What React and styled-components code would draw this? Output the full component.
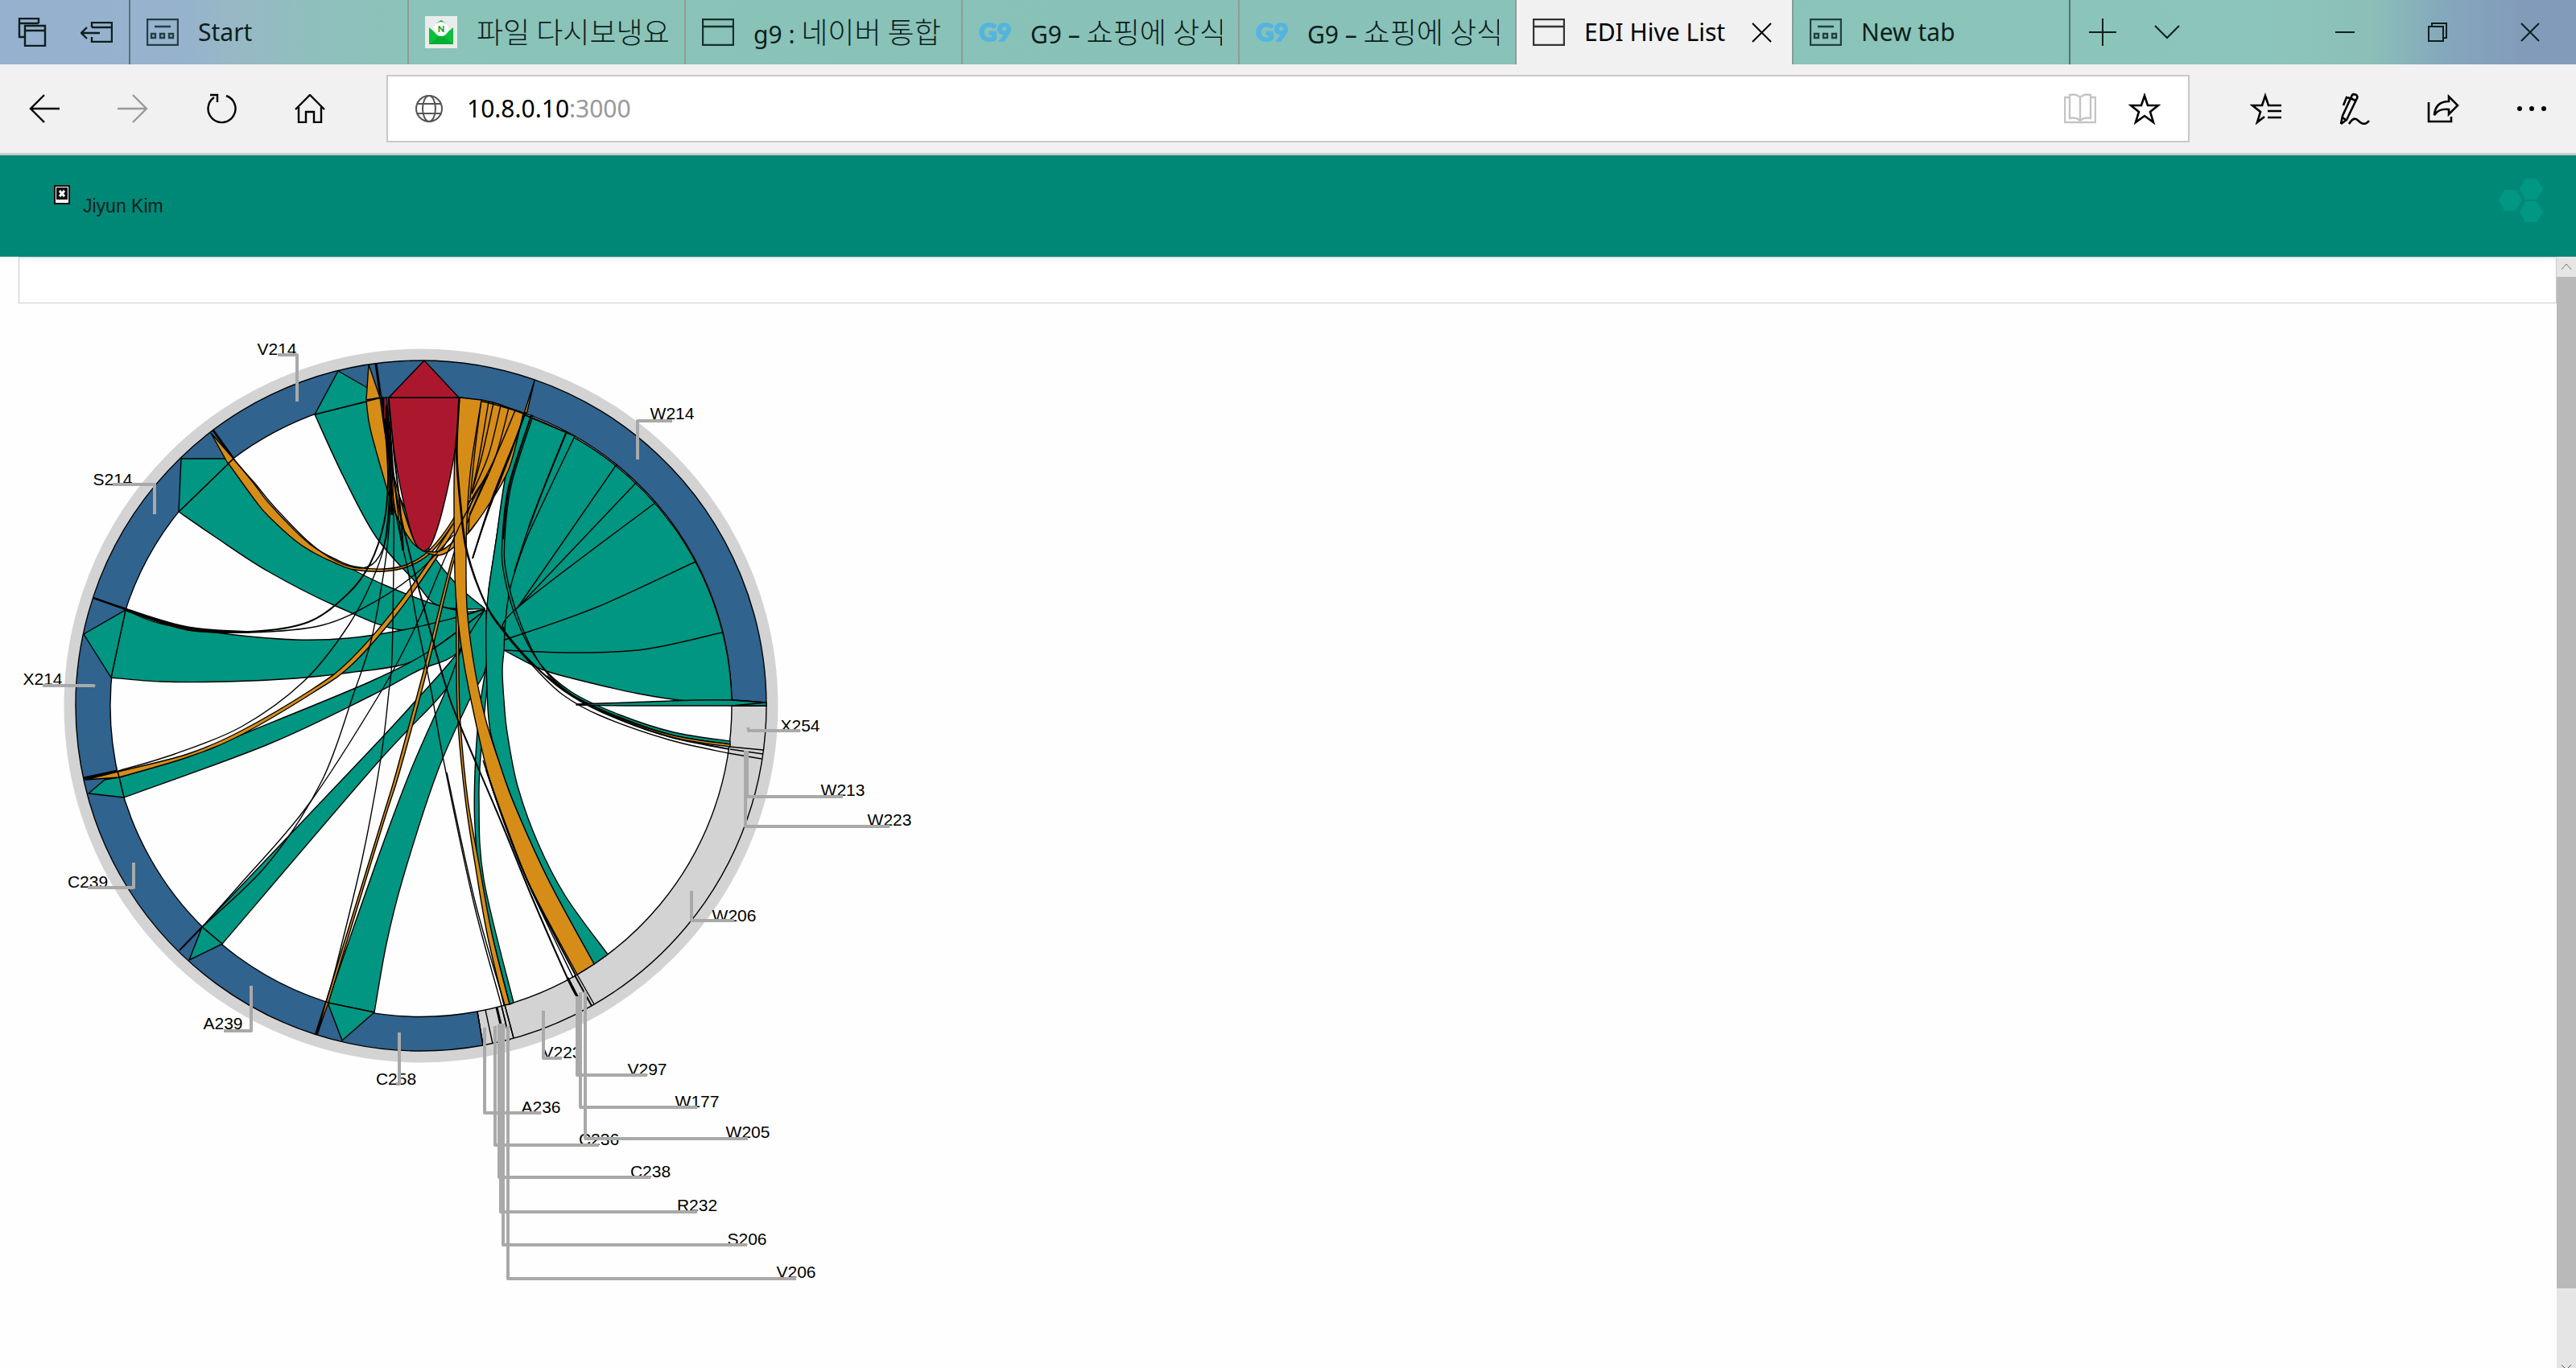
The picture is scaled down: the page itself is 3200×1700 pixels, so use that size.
import React from 'react';
import styled, { createGlobalStyle } from 'styled-components';

const GlobalStyle = createGlobalStyle`
  *, *::before, *::after { box-sizing: border-box; }
  body {
    margin: 0;
    background: #fefefe;
    font-family: "Liberation Sans", "Noto Sans CJK KR", sans-serif;
  }
  button { border: 0; padding: 0; background: none; font: inherit; color: inherit; }
`;

const uiFont = '"Noto Sans", "Noto Sans CJK KR", sans-serif';

const Window = styled.div`
  display: flex;
  flex-direction: column;
  height: 100vh;
  overflow: hidden;
`;

const TabStrip = styled.div`
  display: flex;
  flex: none;
  height: 80px;
  color: #0c1f1d;
  font-family: ${uiFont};
  background: linear-gradient(
    90deg,
    #96b1cf 0,
    #96b2cd 7%,
    #98b8c6 9%,
    #8fbfbd 12%,
    #8ac3b8 17%,
    #88c1b7 50%,
    #8cc5ba 88%,
    #8bbfb8 92%,
    #84a7bc 95%,
    #839bba 98%
  );
`;

const StripButton = styled.button`
  display: grid;
  place-items: center;
  flex: none;
  width: ${(p) => p.$width}px;
  height: 80px;
`;

const TabList = styled.div`
  display: flex;
  flex: none;
  border-left: 2px solid #56727a;
`;

const Tab = styled.div`
  display: flex;
  align-items: center;
  gap: 24px;
  width: ${(p) => (p.$wide ? 346 : 344)}px;
  height: 80px;
  padding: 0 20px;
  color: ${(p) => (p.$active ? '#000' : '#0c1f1d')};
  background: ${(p) => (p.$active ? '#f1f1f1' : 'transparent')};
  border-right: 2px solid ${(p) => (p.$active ? '#7f9f99' : p.$last ? '#4d7770' : '#8f9c96')};

  > svg { flex: none; }
`;

const TabTitle = styled.span`
  flex: 1;
  overflow: hidden;
  white-space: pre;
  font-size: 30px;
  line-height: 60px;
`;

const Hangul = styled.span`
  font-family: "Noto Sans CJK KR", sans-serif;
  font-size: 36px;
  font-weight: 300;
`;

const CloseTab = styled.button`
  display: grid;
  place-items: center;
  width: 36px;
  height: 36px;
`;

const Spacer = styled.div`
  flex: 1;
`;

const Toolbar = styled.div`
  display: flex;
  align-items: center;
  flex: none;
  height: 113px;
  background: #f1f1f1;
  border-bottom: 3px solid #c8cccb;
`;

const ToolButton = styled.button`
  display: grid;
  place-items: center;
  width: 110px;
  height: 84px;
  color: ${(p) => (p.disabled ? '#999' : '#000')};
`;

const AddressBar = styled.form`
  display: flex;
  align-items: center;
  flex: 1;
  height: 84px;
  margin: 0 40px;
  padding: 0 34px;
  background: #fff;
  border: 2px solid #c8c8c8;
  font-family: ${uiFont};
  font-size: 30px;
  line-height: 48px;
`;

const AddressInput = styled.input`
  width: 127px;
  margin-left: 30px;
  padding: 0;
  border: 0;
  outline: 0;
  background: none;
  font: inherit;
  color: #000;
`;

const Port = styled.span`
  color: #999;
`;

const BarButton = styled.button`
  display: grid;
  place-items: center;
  width: 40px;
  height: 48px;
  margin-left: 40px;
`;

const AppHeader = styled.header`
  display: flex;
  justify-content: space-between;
  flex: none;
  height: 126px;
  padding: 28px 40px 0 66px;
  background: #008876;
`;

const User = styled.div`
  display: flex;
  gap: 15px;
  padding-top: 9px;
  font-size: 23px;
  line-height: 26px;
  color: #10211e;
`;

const UserName = styled.span`
  padding-top: 13px;
`;

const Viewport = styled.div`
  display: flex;
  flex: 1;
  min-height: 0;
`;

const Content = styled.main`
  flex: 1;
  overflow: hidden;
  padding-left: 23px;
`;

const FilterInput = styled.input`
  display: block;
  width: 100%;
  height: 58px;
  padding: 0 16px;
  font-size: 22px;
  outline: 0;
  background: #fff;
  border: 1px solid #ccc;
  box-shadow: inset 0 3px 3px #eef3f3;
`;

const Chart = styled.svg`
  display: block;
  margin-left: -23px;

  text {
    font-family: "Liberation Sans", sans-serif;
    font-size: 21px;
    text-anchor: middle;
    fill: #000;
  }
`;

const Scrollbar = styled.div`
  display: flex;
  flex-direction: column;
  flex: none;
  width: 24px;
  background: #e5e5e5;
`;

const ScrollButton = styled.button`
  display: flex;
  justify-content: center;
  align-items: ${(p) => (p.$end ? 'flex-end' : 'center')};
  flex: none;
  height: ${(p) => (p.$end ? 4 : 25)}px;
  overflow: hidden;
`;

const Track = styled.div`
  flex: 1;
`;

const Thumb = styled.div`
  height: 93%;
  background: #b9b9b9;
`;

/* ---------- icons ---------- */

function Svg({ w, h, sw = 2, children, ...rest }) {
  return (
    <svg width={w} height={h} viewBox={`0 0 ${w} ${h}`} fill="none" stroke="currentColor" strokeWidth={sw} aria-hidden="true" {...rest}>
      {children}
    </svg>
  );
}

const TabsIcon = () => (
  <Svg w={36} h={36} sw={2.4}>
    <path d="M8 24H2V1H26V7M2 7H26" />
    <path d="M9 10H34V35H9ZM9 16H34" />
  </Svg>
);
const SetAsideIcon = () => (
  <Svg w={40} h={26} sw={2.4}>
    <path d="M14 7V1H39V25H14V19M14 7H39" />
    <path d="M1 14H24M8 7L1 14L8 21" />
  </Svg>
);
const StartIcon = () => (
  <Svg w={40} h={34} sw={2.4} stroke="#243f42">
    <path d="M1 1H39V33H1ZM10 10H30" />
    <path d="M6 19H11V24H6ZM17 19H22V24H17ZM28 19H33V24H28Z" />
  </Svg>
);
const PageIcon = ({ dark }) => (
  <Svg w={40} h={34} sw={2.4} stroke={dark ? '#333' : '#17302d'}>
    <path d="M1 1H39V33H1ZM1 10H39" />
  </Svg>
);
const MailIcon = () => (
  <Svg w={40} h={40} stroke="none">
    <path d="M0 0H40V40H0Z" fill="#e9ecec" />
    <path d="M20 5L26 9H14Z" fill="#0a9a3a" />
    <path d="M5 14L20 27L35 14V35H5Z" fill="#0cbf3c" />
    <path d="M5 35L20 23L35 35Z" fill="#05ad33" />
    <circle cx="20" cy="16" r="9" fill="#fff" />
    <text x="20" y="20" textAnchor="middle" fontSize="11" fontWeight="900" fontFamily="Lato" fill="#0a9a3a">N</text>
  </Svg>
);
const G9Icon = () => (
  <Svg w={40} h={34} stroke="#53b4e0" sw={1.5}>
    <text x="20" y="28" textAnchor="middle" fontSize="31" fontWeight="900" fontFamily="Lato" fill="#53b4e0">G9</text>
  </Svg>
);
const Cross = ({ size = 25 }) => (
  <Svg w={size} h={size}>
    <path d={`M1 1L${size - 1} ${size - 1}M${size - 1} 1L1 ${size - 1}`} />
  </Svg>
);
const BackIcon = () => (
  <Svg w={38} h={36} sw={2.4}>
    <path d="M38 18H2M19 1L2 18L19 35" />
  </Svg>
);
const ForwardIcon = () => (
  <Svg w={38} h={36} sw={2.4}>
    <path d="M0 18H36M19 1L36 18L19 35" />
  </Svg>
);
const RefreshIcon = () => (
  <Svg w={38} h={38} sw={2.4}>
    <path d="M25 3A17 17 0 1 1 10 5M5 2H14V11" />
  </Svg>
);
const HomeIcon = () => (
  <Svg w={38} h={36} sw={2.4}>
    <path d="M1 19L19 1L37 19M5 16V35H14V22H24V35H33V16" />
  </Svg>
);
const GlobeIcon = () => (
  <Svg w={34} h={34} stroke="#555">
    <circle cx="17" cy="17" r="16" />
    <ellipse cx="17" cy="17" rx="8" ry="16" />
    <path d="M2 11H32M2 23H32" />
  </Svg>
);
const BookIcon = () => (
  <Svg w={40} h={38} sw={2.4} stroke="#c4c4c4">
    <path d="M20 5C16 1 11 1 7 2V31C12 30 17 31 20 34C23 31 28 30 33 31V2C29 1 24 1 20 5ZM20 5V34" />
    <path d="M7 5H1V36H39V5H33" />
  </Svg>
);
const StarIcon = () => (
  <Svg w={40} h={40} sw={2.6}>
    <path d="M20 4L24 16H37L27 24L31 37L20 29L9 37L13 24L3 16H16Z" />
  </Svg>
);
const FavoritesIcon = () => (
  <Svg w={40} h={40} sw={2.6}>
    <path d="M39 16H23L19 4L15 16H3L13 24L9 37L18 30M22 23H39M22 31H39" />
  </Svg>
);
const PenIcon = () => (
  <Svg w={38} h={40} sw={2.6}>
    <path d="M2 39L4 29L16 3C18 1 24 3 22 7L9 34L2 39M4 31L8 34M14 7L20 10M13 7L9 6L5 16" />
    <path d="M12 39C19 28 22 34 26 37C30 40 34 39 37 35" />
  </Svg>
);
const ShareIcon = () => (
  <Svg w={40} h={36} sw={2.6}>
    <path d="M2 10V34H30V28" />
    <path d="M27 3L38 14L27 25V19C18 18 13 20 9 26C10 14 17 9 27 9Z" />
  </Svg>
);
const MoreIcon = () => (
  <Svg w={38} h={8} stroke="none" fill="currentColor">
    <circle cx="4" cy="4" r="3" />
    <circle cx="19" cy="4" r="3" />
    <circle cx="34" cy="4" r="3" />
  </Svg>
);
const BrokenImage = () => (
  <Svg w={22} h={24} stroke="none" role="img">
    <path d="M1 0H21V24H1Z" fill="#111" />
    <path d="M3 2H19V22H3Z" fill="#fff" />
    <path d="M4 3H18V18H4Z" fill="#111" />
    <path d="M8 7L14 14M14 7L8 14" stroke="#fff" strokeWidth="3" />
  </Svg>
);
const HiveLogo = () => (
  <Svg w={56} h={56} stroke="none" fill="#009783">
    <path d="M0 28L7 15H21L29 28L21 41H7Z" />
    <path d="M26 14L33 1H47L55 14L47 27H33Z" />
    <path d="M26 42L33 29H47L55 42L47 55H33Z" />
  </Svg>
);

/* ---------- chord chart ---------- */

const GREEN = '#009681';
const ORANGE = '#d68d17';
const RED = '#ab182d';
const BLUE = '#30638e';
const GREY = '#d3d3d3';
const HAIR = 1.4;

// Smooth cubic path through a list of [x, y] points.
function through(pts) {
  let d = '';
  for (let i = 0; i < pts.length - 1; i++) {
    const a = pts[i - 1] || pts[i];
    const b = pts[i];
    const c = pts[i + 1];
    const e = pts[i + 2] || c;
    d += `C${b[0] + (c[0] - a[0]) / 6} ${b[1] + (c[1] - a[1]) / 6} ${c[0] - (e[0] - b[0]) / 6} ${c[1] - (e[1] - b[1]) / 6} ${c[0]} ${c[1]}`;
  }
  return d;
}
const line = (pts) => `M${pts[0]}` + through(pts);
function ribbon(a, b) {
  const back = [...b].reverse();
  return `M${a[0]}${through(a)}L${back[0]}${through(back)}Z`;
}

const greenRibbons = [
  // V214
  [[[391, 515], [427, 593], [467, 667], [515, 722], [545, 753], [602, 757]], [[476, 494], [490, 600], [533, 682], [568, 727], [602, 756]]],
  // S214
  [[[222, 636], [267, 667], [333, 710], [417, 753], [500, 783], [568, 767], [602, 757]], [[290, 570], [317, 620], [367, 667], [433, 705], [480, 728], [543, 752], [580, 760], [602, 757]]],
  // X214
  [[[138, 842], [200, 847], [283, 847], [367, 843], [433, 836], [500, 826], [537, 807], [598, 762]], [[156, 758], [200, 775], [283, 788], [367, 795], [433, 793], [500, 783], [568, 767], [602, 757]]],
  // C239
  [[[154, 991], [333, 925], [460, 865], [520, 833], [567, 812], [601, 760]], [[148, 966], [233, 940], [300, 913], [460, 847], [537, 807], [598, 762]]],
  // A239
  [[[276, 1173], [467, 950], [555, 855], [573, 805], [603, 760]], [[251, 1152], [460, 932], [517, 870], [567, 813], [601, 760]]],
  // C258
  [[[465, 1258], [480, 1173], [500, 1093], [543, 960], [583, 870], [604, 827], [604, 760]], [[407, 1246], [467, 1073], [510, 958], [553, 860], [575, 803], [602, 758]]],
  // V223
  [[[633, 1248], [599, 1110], [590, 1027], [590, 960], [595, 887], [604, 828]], [[638, 1246], [601, 1093], [595, 993], [598, 927], [605, 853], [606, 830]]],
];

const fan =
  'M650 515A386 386 0 0 1 909 871' +
  through([[909, 871], [855, 871], [793, 862], [711, 843], [671, 831], [626, 808]]) +
  'L604 800L607 733L616 673L629 587Z';

const verticalRibbon = ribbon(
  [[650, 515], [629, 587], [616, 673], [607, 733], [604, 770], [604, 820], [607, 893], [616, 935], [639, 1000], [681, 1093], [738, 1198]],
  [[714, 542], [664, 647], [650, 680], [634, 730], [628, 770], [626, 808], [624, 833], [626, 870], [630, 910], [643, 977], [668, 1047], [702, 1113], [755, 1186]]
);

const fanLines = [
  [[704, 536], [676, 605], [657, 655], [639, 710]],
  [[766, 577], [643, 755]],
  [[791, 599], [643, 755]],
  [[815, 624], [643, 755], [627, 785]],
  [[864, 698], [740, 755], [627, 795]],
  [[897, 786], [800, 807], [711, 811], [626, 808]],
];

const farRibbons = [
  [GREEN, [[660, 516], [632, 603], [624, 670], [626, 713], [643, 773], [671, 825], [710, 860], [769, 888], [837, 910], [907, 921]], [[662, 517], [635, 603], [627, 670], [629, 713], [646, 773], [673, 828], [710, 863], [769, 891], [837, 914], [907, 925]]],
  [ORANGE, [[680, 840], [710, 863], [769, 892], [837, 914], [907, 925]], [[680, 841], [710, 864], [769, 894], [837, 917], [907, 928]]],
  [GREEN, [[716, 875], [780, 873], [864, 870], [909, 870], [952, 873]], [[716, 876], [780, 877], [864, 877], [909, 877], [952, 877]]],
];

const orangeRibbons = [
  // C239
  [[[598, 497], [590, 560], [575, 625], [540, 687], [487, 761], [433, 822], [387, 857], [300, 908], [233, 937], [146, 959]], [[612, 500], [600, 570], [583, 625], [545, 689], [492, 764], [437, 826], [390, 860], [300, 913], [233, 941], [148, 966]]],
  // S214
  [[[612, 500], [590, 590], [563, 645], [533, 684], [507, 701], [477, 707], [440, 704], [417, 695], [390, 680], [367, 660], [333, 624], [317, 603], [290, 570]], [[622, 503], [600, 590], [565, 648], [535, 687], [507, 704], [477, 710], [440, 708], [417, 700], [390, 687], [367, 672], [333, 641], [317, 622], [283, 575]]],
  // V214
  [[[455, 497], [460, 533], [480, 605], [490, 635], [507, 667], [523, 683], [550, 689], [582, 662], [604, 630], [627, 583], [647, 512]], [[472, 494], [482, 560], [498, 623], [515, 673], [527, 684], [548, 684], [570, 665], [590, 630], [610, 575], [632, 507]]],
  // A239
  [[[622, 503], [605, 570], [580, 640], [560, 700], [528, 827], [493, 957], [475, 1017], [431, 1160], [405, 1245]], [[632, 507], [610, 575], [584, 640], [563, 700], [532, 827], [497, 957], [478, 1017], [434, 1160], [408, 1246]]],
  // V206
  [[[571, 494], [567, 700], [567, 833], [569, 900], [578, 993], [590, 1073], [605, 1160], [626, 1249]], [[573, 494], [570, 700], [570, 833], [572, 900], [581, 993], [595, 1073], [611, 1160], [633, 1248]]],
  // W206
  [[[571, 494], [565, 563], [564, 630], [565, 713], [567, 750], [573, 803], [583, 860], [605, 957], [626, 1020], [658, 1100], [717, 1211]], [[598, 497], [585, 580], [580, 647], [579, 717], [581, 767], [590, 833], [603, 893], [620, 947], [639, 1000], [681, 1093], [738, 1198]]],
];

const orangeFan =
  'M573 494A386 386 0 0 1 650 514' +
  through([[650, 514], [632, 583], [604, 632], [582, 662]]) +
  'L583 642' +
  through([[583, 642], [595, 615], [606, 590]]) +
  through([[606, 590], [594, 607], [586, 620]]) +
  'L580 625Z';

const fanOrangeLines = [
  [[598, 497], [590, 560], [584, 620]],
  [[607, 499], [595, 570], [586, 612]],
  [[613, 501], [599, 565], [586, 612]],
  [[622, 504], [607, 565], [586, 614]],
  [[632, 507], [614, 572], [583, 640]],
];

const redBody = ribbon(
  [[483, 494], [490, 563], [502, 627], [515, 673], [526, 685]],
  [[570, 494], [565, 560], [550, 633], [536, 676], [526, 685]]
);

const thinLines = [
  [2, [[483, 494], [490, 600], [507, 680], [528, 760], [553, 850], [571, 900], [622, 1020], [660, 1113], [706, 1218], [718, 1240]]],
  [HAIR, [[480, 494], [486, 600], [498, 670], [507, 710], [518, 773], [536, 860], [550, 940], [588, 1120], [623, 1250], [633, 1293]]],
  [HAIR, [[480, 494], [486, 560], [489, 640], [489, 700], [487, 817], [483, 860], [473, 943], [450, 1067], [417, 1203], [405, 1245]]],
  [HAIR, [[478, 494], [486, 580], [482, 670], [472, 740], [460, 800], [440, 860], [400, 970], [333, 1073], [251, 1152]]],
  [HAIR, [[477, 494], [484, 580], [480, 660], [467, 710], [433, 777], [377, 847], [300, 903], [217, 937], [147, 958]]],
  [HAIR, [[640, 510], [612, 575], [575, 645], [550, 700], [517, 777], [473, 860], [383, 1000], [300, 1097], [251, 1152]]],
  [2, [[116, 743], [157, 757], [233, 780], [310, 785], [383, 773], [433, 737], [460, 700], [477, 650], [482, 600], [480, 550], [474, 494]]],
  [HAIR, [[116, 743], [157, 758], [233, 782], [310, 786], [400, 777], [467, 747], [520, 710], [563, 665]]],
  [HAIR, [[265, 535], [290, 570], [317, 601], [340, 629], [383, 673], [417, 697], [447, 706], [467, 697], [480, 667], [485, 600]]],
  [HAIR, [[482, 494], [483, 540], [490, 600], [500, 684]]],
  [2, [[485, 494], [489, 560], [496, 620], [501, 684]]],
  [3, [[476, 494], [483, 560], [487, 640]]],
  [2, [[653, 512], [640, 547], [610, 623], [587, 694]]],
  [HAIR, [[652, 513], [636, 560], [608, 632], [587, 694]]],
  [2, [[570, 494], [567, 563], [572, 630], [580, 687], [603, 750], [627, 785], [660, 823], [700, 858], [748, 885], [830, 915], [906, 931]]],
  [HAIR, [[571, 494], [568, 563], [573, 630], [581, 687], [604, 752], [627, 787], [667, 833], [700, 864], [745, 889], [830, 919], [905, 936]]],
  [2, [[660, 516], [633, 603], [625, 670]]],
  [2, [[704, 536], [676, 605], [657, 655]]],
  [HAIR, [[600, 945], [626, 1022], [658, 1102], [712, 1215]]],
  [2, [[604, 957], [627, 1022], [660, 1105], [715, 1212]]],
  [HAIR, [[555, 960], [590, 1120], [627, 1249], [638, 1290]]],
];

const separators = [
  [3, 467, 452, 473, 494], [3, 265, 535, 290, 570], [2, 116, 743, 157, 757], [3, 104, 967, 146, 958],
  [2, 223, 1181, 251, 1152], [4, 393, 1285, 406, 1245], [HAIR, 593, 1257, 600, 1299], [HAIR, 603, 1255, 612, 1297],
  [3, 617, 1252, 622, 1273], [HAIR, 623, 1250, 633, 1293], [HAIR, 627, 1249, 638, 1290], [3, 705, 1215, 718, 1240],
  [2, 714, 1212, 735, 1250], [HAIR, 717, 1211, 738, 1248], [HAIR, 907, 928, 948, 932], [HAIR, 907, 931, 948, 937],
  [HAIR, 905, 936, 946, 943], [HAIR, 909, 877, 952, 877],
];

const arrowHeads = [
  [GREEN, '391,515 420,461 474,492 474,494'],
  [ORANGE, '455,497 458,453 472,494'],
  [GREEN, '222,636 225,570 279,570 290,570'],
  [ORANGE, '283,576 262,538 290,570'],
  [GREEN, '156,758 104,788 138,842'],
  [GREEN, '148,966 130,969 110,986 154,991'],
  [ORANGE, '146,959 106,969 148,966'],
  [GREEN, '251,1152 235,1193 276,1173'],
  [GREEN, '407,1246 425,1293 465,1258'],
  [ORANGE, '405,1245 394,1285 408,1246'],
  [ORANGE, '651,514 664,473 654,515'],
];

// name, text x, text baseline, leader points
const labels = [
  ['V214', 344, 441, '369,499 369,441 345,441'],
  ['S214', 140, 603, '192,639 192,602 140,602'],
  ['X214', 53, 851, '118,853 116,852 53,852'],
  ['W214', 835, 521, '792,571 792,523 835,523'],
  ['C239', 109, 1103, '166,1072 166,1103 109,1103'],
  ['A239', 277, 1279, '312,1225 312,1281 278,1281'],
  ['C258', 492, 1348, '496,1283 496,1347 492,1347'],
  ['X254', 994, 909, '929,904 930,908 994,908'],
  ['W213', 1047, 989, '928,933 928,990 1047,990'],
  ['W223', 1105, 1026, '926,933 926,1027 1105,1027'],
  ['W206', 912, 1145, '859,1107 859,1144 912,1144'],
  ['V223', 698, 1315, '675,1256 675,1315 698,1315'],
  ['V297', 804, 1336, '717,1238 717,1336 804,1336'],
  ['W177', 866, 1376, '721,1233 721,1376 866,1376'],
  ['W205', 929, 1414, '727,1232 727,1415 929,1415'],
  ['A236', 672, 1383, '602,1277 602,1383 672,1383'],
  ['C236', 744, 1423, '615,1275 615,1423 744,1423'],
  ['C238', 808, 1463, '620,1273 620,1463 808,1463'],
  ['R232', 866, 1505, '622,1272 622,1506 866,1506'],
  ['S206', 928, 1547, '625,1272 625,1547 928,1547'],
  ['V206', 989, 1588, '631,1275 631,1589 989,1589'],
];

function ChordChart() {
  return (
    <Chart width="1200" height="1240" viewBox="0 377 1200 1240" role="img" aria-label="Hive chord chart">
      <circle cx="523" cy="877" r="436" fill="none" stroke={GREY} strokeWidth="15" />
      <g stroke="#000" strokeWidth={HAIR} strokeLinejoin="round">
        <path fill={GREY} d="M952 877A429 429 0 0 1 600 1299L593 1257A386 386 0 0 0 909 877Z" />
        <path fill={BLUE} d="M952 877A429 429 0 1 0 600 1299L593 1257A386 386 0 1 1 909 877Z" />
        {separators.map(([w, x1, y1, x2, y2], i) => (
          <line key={i} x1={x1} y1={y1} x2={x2} y2={y2} strokeWidth={w} />
        ))}
        {greenRibbons.map(([a, b], i) => <path key={i} d={ribbon(a, b)} fill={GREEN} />)}
        <path d={fan} fill={GREEN} />
        <path d={verticalRibbon} fill={GREEN} />
        {farRibbons.map(([fill, a, b], i) => <path key={i} d={ribbon(a, b)} fill={fill} />)}
        {fanLines.map((p, i) => <path key={i} d={line(p)} fill="none" />)}
        {orangeRibbons.slice(0, 5).map(([a, b], i) => <path key={i} d={ribbon(a, b)} fill={ORANGE} />)}
        <path d={orangeFan} fill={ORANGE} />
        {fanOrangeLines.map((p, i) => <path key={i} d={line(p)} fill="none" />)}
        <path d={ribbon([[157, 757], [233, 779], [310, 785]], [[157, 759], [233, 783], [310, 786]])} fill={RED} />
        {arrowHeads.map(([fill, points], i) => <polygon key={i} points={points} fill={fill} />)}
        <path d={ribbon(...orangeRibbons[5])} fill={ORANGE} />
        {thinLines.map(([w, p], i) => <path key={i} d={line(p)} fill="none" strokeWidth={w} />)}
        <path d="M909 870L952 873M909 877L952 873" fill="none" />
        <path d={redBody} fill={RED} />
        <polygon points="483,494 527,448 570,494" fill={RED} />
        <path d="M478 495V520" stroke={RED} />
      </g>
      {labels.map(([name, x, y]) => <text key={name} x={x} y={y}>{name}</text>)}
      <g fill="none" stroke="#a9a9a9" strokeWidth="4" strokeLinejoin="round">
        {labels.map(([name, , , points]) => <polyline key={name} points={points} />)}
      </g>
    </Chart>
  );
}

/* ---------- window ---------- */

const tabs = [
  { icon: <StartIcon />, latin: 'Start' },
  { icon: <MailIcon />, hangul: '파일 다시보냉요' },
  { icon: <PageIcon />, latin: 'g9 : ', hangul: '네이버 통합' },
  { icon: <G9Icon />, latin: 'G9 – ', hangul: '쇼핑에 상식' },
  { icon: <G9Icon />, latin: 'G9 – ', hangul: '쇼핑에 상식' },
  { icon: <PageIcon dark />, latin: 'EDI Hive List', active: true },
  { icon: <StartIcon />, latin: 'New tab' },
];

export default function App() {
  return (
    <Window>
      <GlobalStyle />
      <TabStrip>
        <StripButton $width={80} aria-label="Tabs set aside"><TabsIcon /></StripButton>
        <StripButton $width={80} aria-label="Set tabs aside"><SetAsideIcon /></StripButton>
        <TabList role="tablist">
          {tabs.map((tab, i) => (
            <Tab key={i} role="tab" aria-selected={!!tab.active} $active={tab.active} $wide={i === 0} $last={i === tabs.length - 1}>
              {tab.icon}
              <TabTitle>
                {tab.latin}
                {tab.hangul && <Hangul>{tab.hangul}</Hangul>}
              </TabTitle>
              {tab.active && <CloseTab aria-label="Close tab"><Cross /></CloseTab>}
            </Tab>
          ))}
        </TabList>
        <StripButton $width={80} aria-label="New tab">
          <Svg w={34} h={34}><path d="M0 17H34M17 0V34" /></Svg>
        </StripButton>
        <StripButton $width={80} aria-label="Show tab previews">
          <Svg w={32} h={18}><path d="M1 1L16 16L31 1" /></Svg>
        </StripButton>
        <Spacer />
        <StripButton $width={115} aria-label="Minimize">
          <Svg w={24} h={24}><path d="M0 12H24" /></Svg>
        </StripButton>
        <StripButton $width={115} aria-label="Restore">
          <Svg w={24} h={24}><path d="M1 5H19V23H1ZM5 5V1H23V19H19" /></Svg>
        </StripButton>
        <StripButton $width={115} aria-label="Close"><Cross size={24} /></StripButton>
      </TabStrip>

      <Toolbar>
        <ToolButton aria-label="Back"><BackIcon /></ToolButton>
        <ToolButton aria-label="Forward" disabled><ForwardIcon /></ToolButton>
        <ToolButton aria-label="Refresh"><RefreshIcon /></ToolButton>
        <ToolButton aria-label="Home"><HomeIcon /></ToolButton>
        <AddressBar>
          <GlobeIcon />
          <AddressInput aria-label="Address" defaultValue="10.8.0.10" />
          <Port>:3000</Port>
          <Spacer />
          <BarButton type="button" aria-label="Reading view"><BookIcon /></BarButton>
          <BarButton type="button" aria-label="Add to favorites"><StarIcon /></BarButton>
        </AddressBar>
        <ToolButton aria-label="Favorites"><FavoritesIcon /></ToolButton>
        <ToolButton aria-label="Add notes"><PenIcon /></ToolButton>
        <ToolButton aria-label="Share"><ShareIcon /></ToolButton>
        <ToolButton aria-label="More"><MoreIcon /></ToolButton>
      </Toolbar>

      <AppHeader>
        <User>
          <BrokenImage />
          <UserName>Jiyun Kim</UserName>
        </User>
        <HiveLogo />
      </AppHeader>

      <Viewport>
        <Content>
          <FilterInput aria-label="Filter" />
          <ChordChart />
        </Content>
        <Scrollbar>
          <ScrollButton aria-label="Scroll up">
            <Svg w={14} h={9} sw={1} stroke="#777"><path d="M1 8L7 1L13 8" /></Svg>
          </ScrollButton>
          <Track><Thumb /></Track>
          <ScrollButton $end aria-label="Scroll down">
            <Svg w={14} h={4} sw={1} stroke="#555"><path d="M1 0L5 4M13 0L9 4" /></Svg>
          </ScrollButton>
        </Scrollbar>
      </Viewport>
    </Window>
  );
}
